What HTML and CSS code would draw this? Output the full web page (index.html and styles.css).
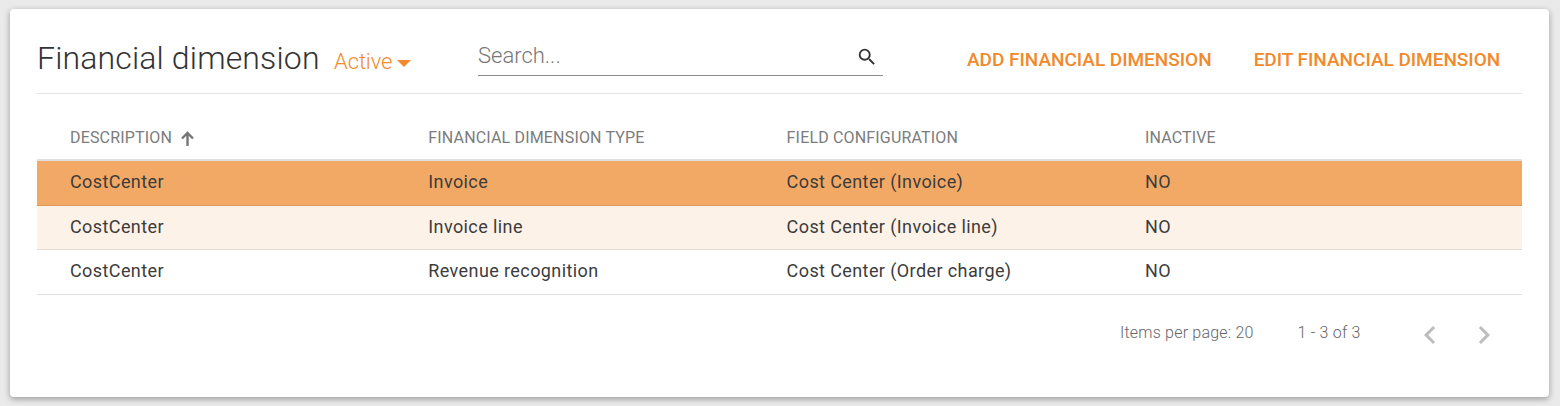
FILE: index.html
```html
<!DOCTYPE html>
<html>
<head>
    <title>Financial dimension</title>
    <link rel="stylesheet" href="styles.css">
</head>
<body>
    <div class="card">
        <div class="toolbar">
            <h1 class="title">Financial dimension</h1>
            <div class="status">Active <span class="caret"></span></div>
            <div class="search">
                <span class="search-text">Search...</span>
                <svg class="search-icon" viewBox="0 0 24 24" width="22" height="22"><path d="M15.5 14h-.79l-.28-.27A6.47 6.47 0 0 0 16 9.5 6.5 6.5 0 1 0 9.5 16c1.61 0 3.09-.59 4.23-1.57l.27.28v.79l5 4.99L20.49 19l-4.99-5zm-6 0C7.01 14 5 11.99 5 9.5S7.01 5 9.5 5 14 7.01 14 9.5 11.99 14 9.5 14z"/></svg>
            </div>
            <div class="actions">
                <a class="action">ADD FINANCIAL DIMENSION</a>
                <a class="action">EDIT FINANCIAL DIMENSION</a>
            </div>
        </div>
        <div class="table">
            <div class="row head">
                <div class="cell">DESCRIPTION <svg class="sort" viewBox="0 0 13 15" width="13" height="15"><path d="M6.5 15V2M1 7.5l5.5-5.5 5.5 5.5"/></svg></div>
                <div class="cell">FINANCIAL DIMENSION TYPE</div>
                <div class="cell">FIELD CONFIGURATION</div>
                <div class="cell">INACTIVE</div>
            </div>
            <div class="row selected">
                <div class="cell">CostCenter</div>
                <div class="cell">Invoice</div>
                <div class="cell">Cost Center (Invoice)</div>
                <div class="cell">NO</div>
            </div>
            <div class="row hovered">
                <div class="cell">CostCenter</div>
                <div class="cell">Invoice line</div>
                <div class="cell">Cost Center (Invoice line)</div>
                <div class="cell">NO</div>
            </div>
            <div class="row">
                <div class="cell">CostCenter</div>
                <div class="cell">Revenue recognition</div>
                <div class="cell">Cost Center (Order charge)</div>
                <div class="cell">NO</div>
            </div>
        </div>
        <div class="pager">
            <span class="per-page">Items per page: 20</span>
            <span class="range">1 - 3 of 3</span>
            <svg class="chevron prev" viewBox="0 0 24 24" width="36" height="36"><path d="M15.41 7.41L14 6l-6 6 6 6 1.41-1.41L10.83 12z"/></svg>
            <svg class="chevron next" viewBox="0 0 24 24" width="36" height="36"><path d="M10 6L8.59 7.41 13.17 12l-4.58 4.59L10 18l6-6z"/></svg>
        </div>
    </div>
</body>
</html>
```

FILE: styles.css
```css
html, body{
    height: 100%;
}
body{
    margin: 0;
    padding: 9px 11px 9px 10px;
    box-sizing: border-box;
    background: #EAEAEA;
    font-family: Roboto, "Liberation Sans", sans-serif;
    overflow: hidden;
}
.card{
    box-sizing: border-box;
    height: 388px;
    padding: 0 27px;
    background: #FFF;
    border-radius: 4px;
    box-shadow: 0 2px 6px rgba(0, 0, 0, 0.35);
}
.toolbar{
    display: flex;
    align-items: center;
    height: 84px;
    border-bottom: 1px solid #E3E3E3;
}
.title{
    margin: 13px 0 0 0;
    width: 297px;
    font-size: 32px;
    font-weight: 300;
    letter-spacing: 0.15px;
    color: #333;
    white-space: nowrap;
}
.status{
    display: flex;
    align-items: center;
    width: 144px;
    margin-top: 20px;
    font-size: 22px;
    font-weight: 300;
    letter-spacing: -0.1px;
    color: #F08A2C;
}
.caret{
    margin: 5px 0 0 5px;
    border-left: 7px solid transparent;
    border-right: 7px solid transparent;
    border-top: 7px solid #F08A2C;
}
.search{
    display: flex;
    align-items: center;
    justify-content: space-between;
    box-sizing: border-box;
    width: 405px;
    height: 39px;
    margin-top: 10px;
    border-bottom: 1px solid #8C8C8C;
    font-size: 22px;
    font-weight: 300;
    color: #777;
}
.search-icon{
    margin: 3px 5px 0 0;
    fill: #333;
}
.actions{
    display: flex;
    gap: 42px;
    margin: 16px 0 0 84px;
}
.action{
    font-size: 19px;
    font-weight: 500;
    letter-spacing: -0.03px;
    color: #F08A2C;
    white-space: nowrap;
}
.table{
    width: 100%;
}
.row{
    display: grid;
    grid-template-columns: 358.3px 358.3px 358.3px 1fr;
    align-items: center;
    height: 44.6px;
    box-sizing: border-box;
    padding-left: 33px;
    padding-bottom: 2px;
    border-bottom: 1px solid #E0E0E0;
    font-size: 18px;
    letter-spacing: 0.4px;
    color: #3C3C3C;
}
.row.head{
    height: 67px;
    padding-top: 22px;
    padding-bottom: 0;
    border-bottom: 2px solid #E0E0E0;
    font-size: 16px;
    letter-spacing: 0.17px;
    color: #7C7C7C;
}
.row.selected{
    background: #F2A966;
    border-bottom-color: #DE9751;
}
.row.hovered{
    background: #FDF2E8;
    border-bottom-color: #E2DAD3;
}
.sort{
    fill: none;
    stroke: #777;
    stroke-width: 2.4px;
    vertical-align: -3px;
    margin-left: 5px;
}
.pager{
    display: flex;
    align-items: center;
    height: 76px;
    font-size: 16px;
    letter-spacing: 0.2px;
    font-weight: 300;
    color: #666;
}
.per-page{
    margin-left: 1083px;
}
.range{
    margin-left: 44px;
}
.chevron{
    fill: #BDBDBD;
    margin-top: 4px;
}
.prev{
    margin-left: 51px;
}
.next{
    margin-left: 18px;
}
```
